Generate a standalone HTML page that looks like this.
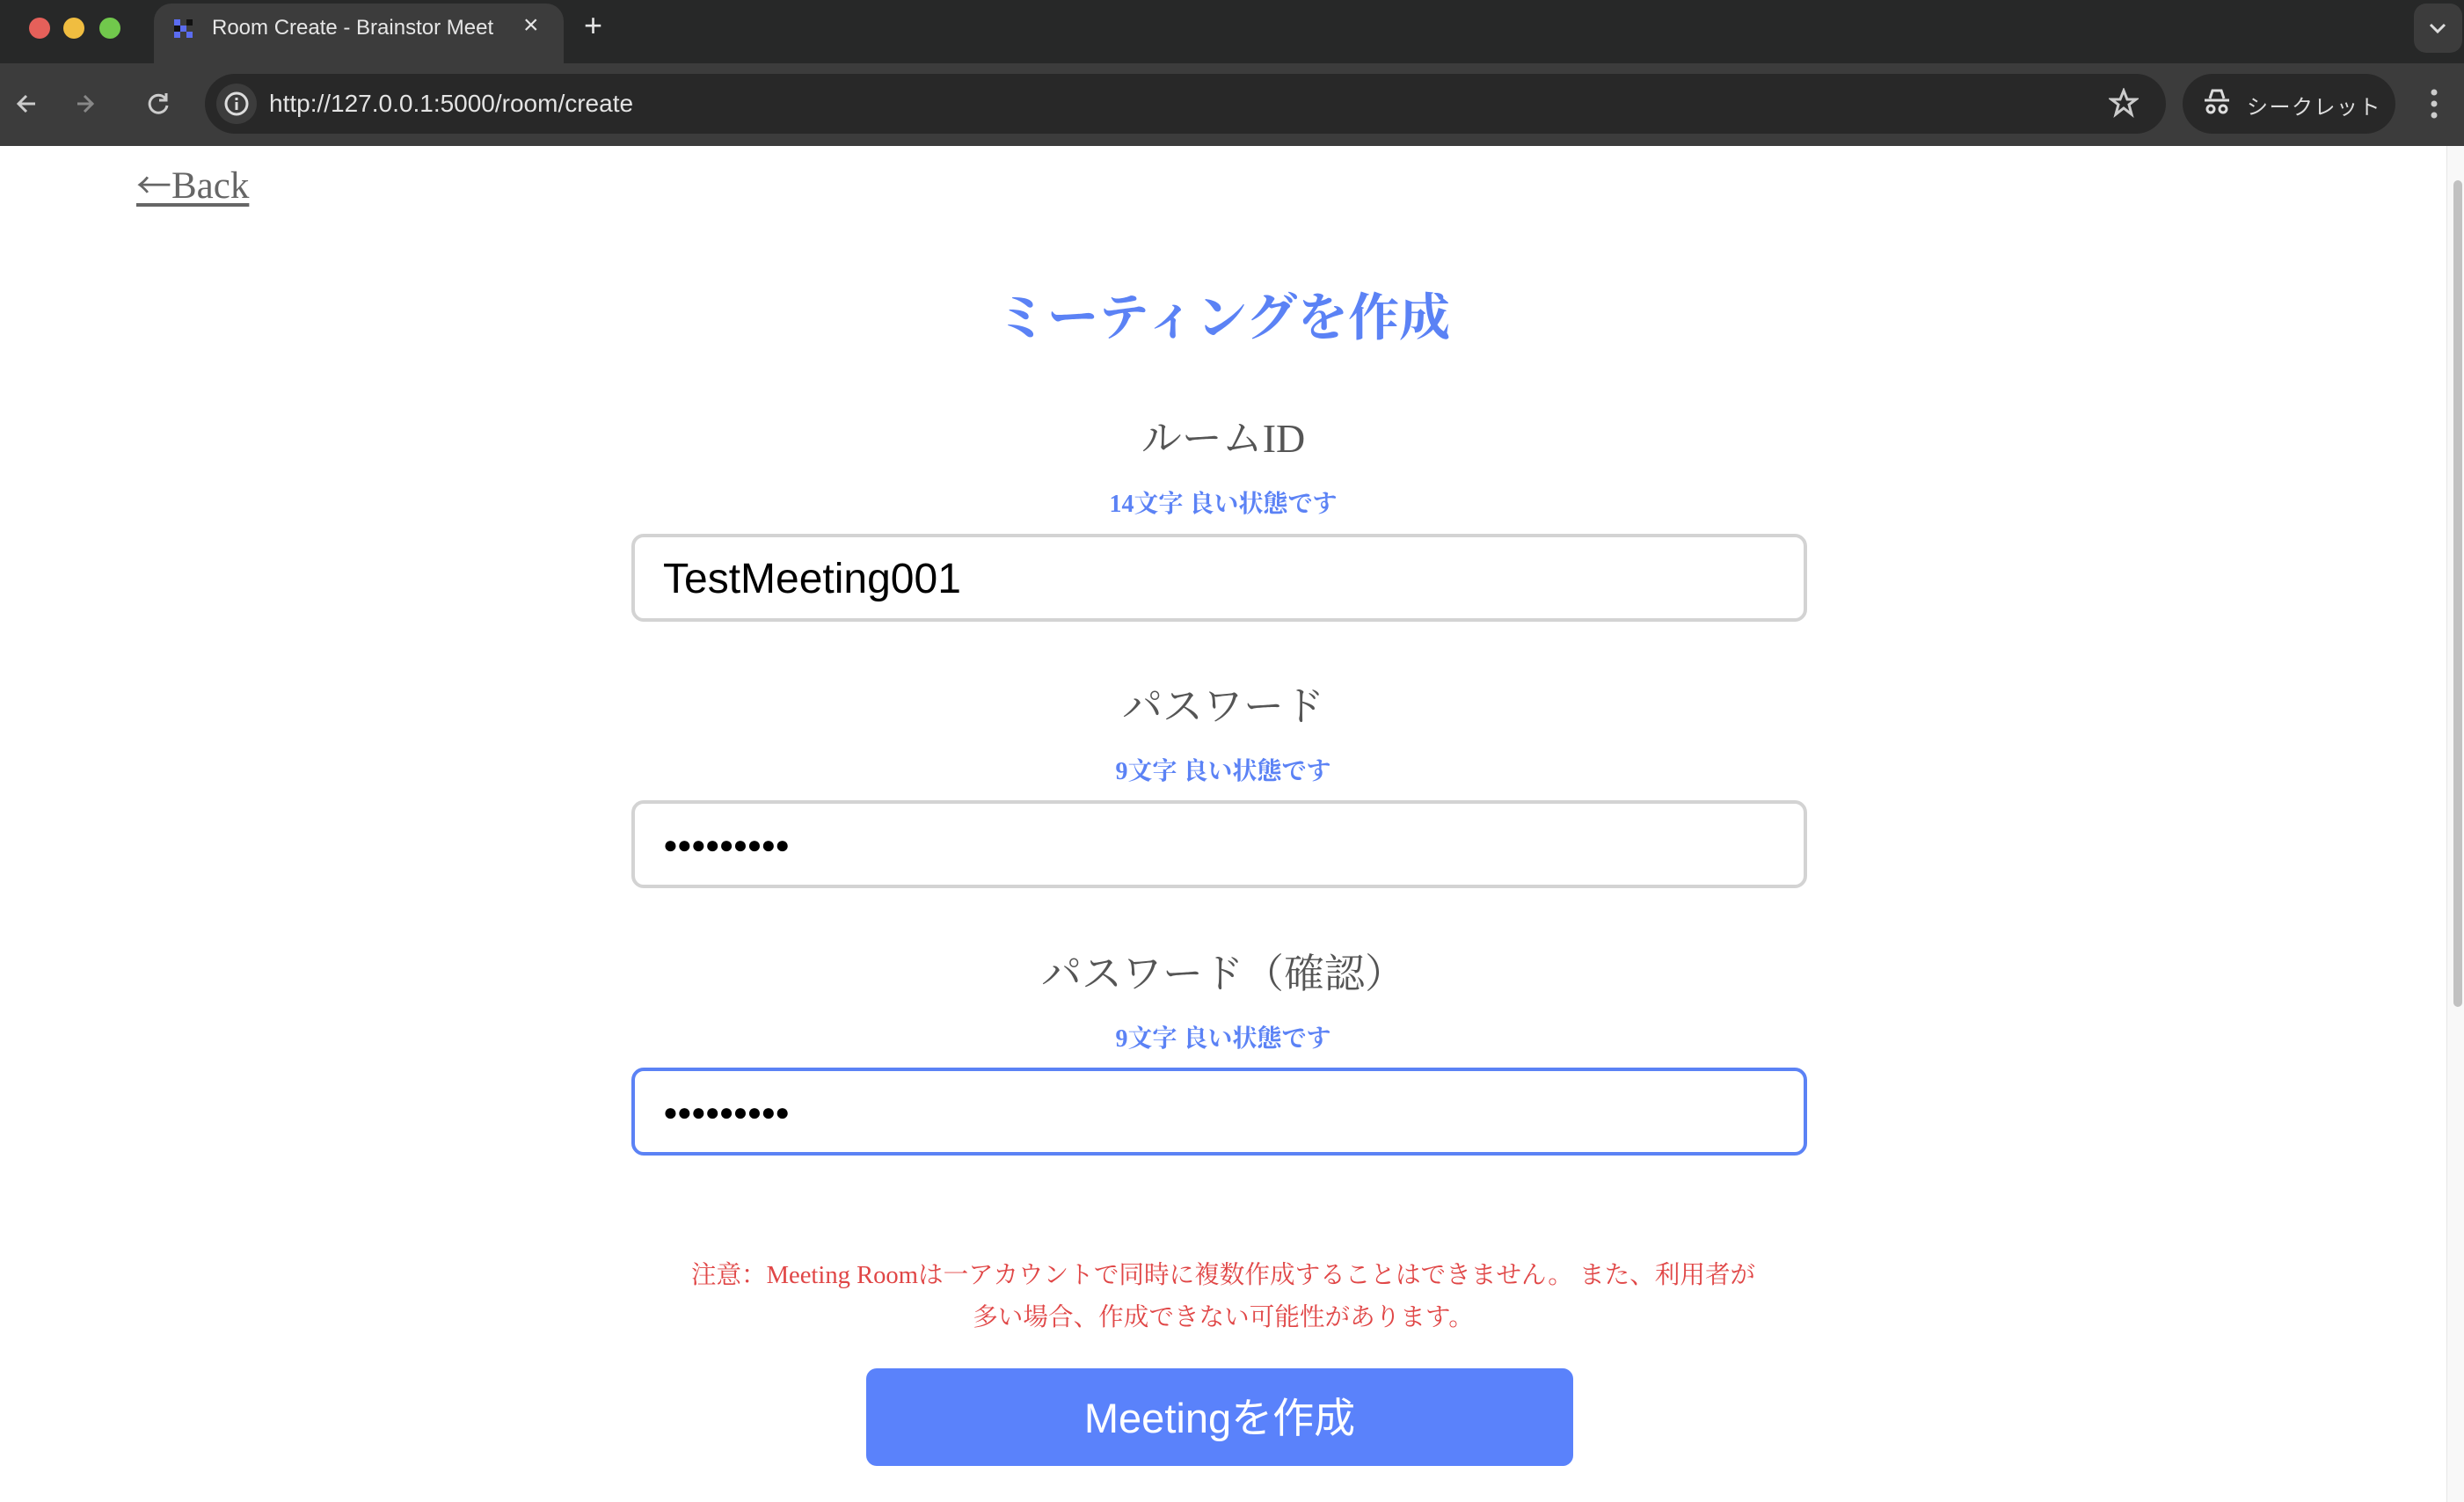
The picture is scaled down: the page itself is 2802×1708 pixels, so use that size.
<!DOCTYPE html>
<html><head><meta charset="utf-8"><style>
*{margin:0;padding:0;box-sizing:border-box}
html,body{width:2802px;height:1708px;overflow:hidden;background:#fff;position:relative;font-family:"Liberation Sans","Noto Sans CJK JP",sans-serif}
.abs{position:absolute}
.tabbar{left:0;top:0;width:2802px;height:72px;background:#272828}
.tab{left:175px;top:4px;width:466px;height:68px;background:#3c3c3c;border-radius:20px 20px 0 0}
.toolbar{left:0;top:72px;width:2802px;height:94px;background:#3c3c3c}
.pill{background:#282828;border-radius:34px}
.dot{width:24px;height:24px;border-radius:50%;top:20px}
.serif{font-family:"Liberation Serif","Noto Serif CJK SC",serif}
.ctr{left:0;width:2782px;text-align:center;white-space:nowrap}
.label{font-size:46px;color:#555;line-height:1}
.hint{font-size:28px;color:#5b82f5;font-weight:bold;line-height:1}
.inp{left:718px;width:1337px;height:100px;border:4px solid #d3d3d3;border-radius:14px;background:#fff}
.dots{left:32px;top:33px;font-size:28px;letter-spacing:-1px;color:#000;line-height:1}
.note{font-size:28.6px;color:#e04646;line-height:1}
</style></head><body>
<div class="abs tabbar"></div>
<div class="abs dot" style="left:33px;background:#e5605a"></div>
<div class="abs dot" style="left:72px;background:#f0bd40"></div>
<div class="abs dot" style="left:113px;background:#71c84c"></div>
<div class="abs tab"></div>
<svg class="abs" style="left:198px;top:22px" width="22" height="22"><rect x="0" y="0" width="7" height="7" fill="#5b6cf0"/><rect x="7" y="7" width="7" height="7" fill="#5b6cf0"/><rect x="0" y="14" width="7" height="7" fill="#5b6cf0"/><rect x="14" y="0" width="7" height="7" fill="#111"/><rect x="14" y="14" width="7" height="7" fill="#5b6cf0"/><rect x="0" y="7" width="7" height="7" fill="#111"/></svg>
<div class="abs" style="left:241px;top:18px;font-size:24px;color:#e6e6e6;white-space:nowrap;width:330px;overflow:hidden">Room Create - Brainstor Meet</div>
<div class="abs" style="left:595px;top:12px;font-size:30px;color:#e6e6e6">×</div>
<div class="abs" style="left:664px;top:8px;font-size:36px;color:#e6e6e6">+</div>
<div class="abs" style="left:2745px;top:4px;width:55px;height:56px;background:#3c3c3c;border-radius:14px"></div>
<svg class="abs" style="left:2760px;top:24px" width="24" height="16"><path d="M4 4l8 8 8-8" stroke="#ddd" stroke-width="3" fill="none"/></svg>
<div class="abs toolbar"></div>
<svg class="abs" style="left:18px;top:102px" width="90" height="32"><path d="M22 16H4M12 7l-9 9 9 9" stroke="#ccc" stroke-width="3" fill="none"/><path d="M72 16h18M80 7l9 9-9 9" stroke="#888" stroke-width="3" fill="none" transform="translate(-2 0)"/></svg>
<svg class="abs" style="left:164px;top:102px" width="32" height="32"><path d="M24 10a10 10 0 1 0 2 8" stroke="#ccc" stroke-width="3" fill="none"/><path d="M25 4v8h-8" stroke="#ccc" stroke-width="3" fill="none"/></svg>
<div class="abs pill" style="left:233px;top:84px;width:2230px;height:68px"></div>
<div class="abs" style="left:246px;top:95px;width:46px;height:46px;border-radius:50%;background:#3c3c3c"></div>
<svg class="abs" style="left:253px;top:102px" width="32" height="32"><circle cx="16" cy="16" r="12" stroke="#ddd" stroke-width="3" fill="none"/><rect x="14.5" y="14" width="3" height="9" fill="#ddd"/><rect x="14.5" y="9" width="3" height="3" fill="#ddd"/></svg>
<div class="abs" style="left:306px;top:102px;font-size:28px;color:#e3e3e3">http://127.0.0.1:5000/room/create</div>
<svg class="abs" style="left:2398px;top:100px" width="34" height="34"><path d="M17 3l4 10h10l-8 6 3 11-9-7-9 7 3-11-8-6h10z" stroke="#ccc" stroke-width="3" fill="none"/></svg>
<div class="abs pill" style="left:2482px;top:84px;width:242px;height:68px"></div>
<svg class="abs" style="left:2506px;top:101px" width="30" height="30"><path d="M7 11l3-9h10l3 9M1 13h28" stroke="#ddd" stroke-width="3" fill="none"/><circle cx="8" cy="23" r="4" stroke="#ddd" stroke-width="3" fill="none"/><circle cx="22" cy="23" r="4" stroke="#ddd" stroke-width="3" fill="none"/></svg>
<div class="abs" style="left:2555px;top:102px;font-size:24px;color:#ddd;letter-spacing:1.5px;font-family:'Noto Sans CJK JP',sans-serif">シークレット</div>
<svg class="abs" style="left:2760px;top:100px" width="16" height="36"><circle cx="8" cy="5" r="3.5" fill="#ccc"/><circle cx="8" cy="18" r="3.5" fill="#ccc"/><circle cx="8" cy="31" r="3.5" fill="#ccc"/></svg>
<div class="abs" style="left:2782px;top:166px;width:20px;height:1542px;background:#f8f8f8;border-left:1px solid #e6e6e6"></div>
<div class="abs" style="left:2790px;top:205px;width:10px;height:940px;background:#c1c1c1;border-radius:5px"></div>

<div class="abs serif" style="left:155px;top:188px;font-size:43px;color:#666;text-decoration:underline;text-underline-offset:6px;line-height:1"><span style="font-family:'Noto Sans CJK JP',sans-serif;font-size:40px">←</span>Back</div>
<div class="abs ctr serif" style="top:333px;font-size:58px;color:#5b82f5;font-weight:bold;line-height:1">ミーティングを作成</div>

<div class="abs ctr serif label" style="top:476px">ルームID</div>
<div class="abs ctr serif hint" style="top:560px">14文字 良い状態です</div>
<div class="abs inp" style="top:607px"><div class="abs" style="left:32px;top:22px;font-size:48px;color:#000;line-height:1.1">TestMeeting001</div></div>

<div class="abs ctr serif label" style="top:781px">パスワード</div>
<div class="abs ctr serif hint" style="top:864px">9文字 良い状態です</div>
<div class="abs inp" style="top:910px"><div class="abs dots">●●●●●●●●●</div></div>

<div class="abs ctr serif label" style="top:1085px">パスワード（確認）</div>
<div class="abs ctr serif hint" style="top:1168px">9文字 良い状態です</div>
<div class="abs inp" style="top:1214px;border-color:#5b82f5"><div class="abs dots">●●●●●●●●●</div></div>

<div class="abs ctr serif note" style="top:1437px">注意：Meeting Roomは一アカウントで同時に複数作成することはできません。 また、利用者が</div>
<div class="abs ctr serif note" style="top:1485px">多い場合、作成できない可能性があります。</div>

<div class="abs" style="left:985px;top:1556px;width:804px;height:111px;background:#5a82fb;border-radius:12px;color:#fff;font-size:47px;text-align:center;line-height:113px">Meetingを作成</div>
</body></html>
